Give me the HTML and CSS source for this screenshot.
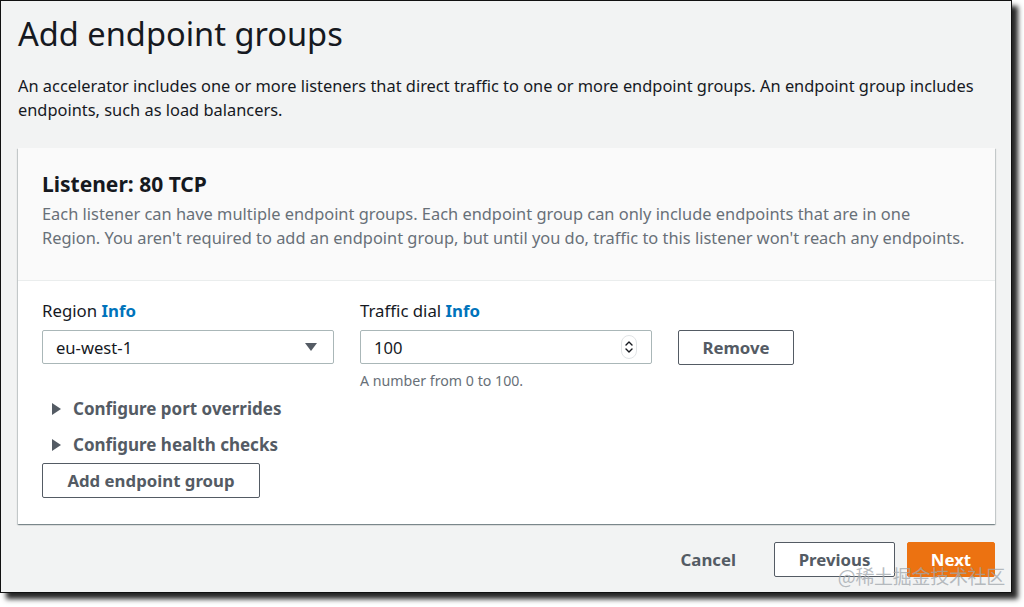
FILE: index.html
```html
<!DOCTYPE html>
<html lang="en">
<head>
  <meta charset="UTF-8" />
  <meta name="viewport" content="width=device-width, initial-scale=1.0" />
  <title>Add endpoint groups</title>
  <link rel="stylesheet" href="styles.css">
</head>
<body>
  <div class="frame">
    <h1 class="page-title">Add endpoint groups</h1>
    <p class="page-desc">An accelerator includes one or more listeners that direct traffic to one or more endpoint groups. An endpoint group includes endpoints, such as load balancers.</p>

    <section class="card">
      <header class="card-head">
        <h2 class="card-title">Listener: 80 TCP</h2>
        <p class="card-desc">Each listener can have multiple endpoint groups. Each endpoint group can only include endpoints that are in one Region. You aren't required to add an endpoint group, but until you do, traffic to this listener won't reach any endpoints.</p>
      </header>

      <div class="card-body">
        <div class="fields">
          <label class="field-label">Region <a class="info">Info</a></label>
          <label class="field-label">Traffic dial <a class="info">Info</a></label>
          <span></span>

          <div class="select">
            <span>eu-west-1</span>
            <svg class="caret" width="12" height="8" viewBox="0 0 12 8"><path d="M0 0h12L6 8z" fill="#545b64"/></svg>
          </div>
          <div class="input">
            <span>100</span>
            <svg class="spin" width="16" height="24" viewBox="0 0 16 24">
              <rect x="0.5" y="0.5" width="15" height="23" rx="7.5" fill="#fff" stroke="#e1e4e6"/>
              <path d="M5 10l3-3 3 3M5 14l3 3 3-3" fill="none" stroke="#16191f" stroke-width="1.4" stroke-linecap="round" stroke-linejoin="round"/>
            </svg>
          </div>
          <button class="btn">Remove</button>

          <span></span>
          <p class="hint">A number from 0 to 100.</p>
          <span></span>
        </div>

        <div class="expander"><span class="tri"></span>Configure port overrides</div>
        <div class="expander"><span class="tri"></span>Configure health checks</div>
        <button class="btn btn-add">Add endpoint group</button>
      </div>
    </section>

    <div class="actions">
      <button class="btn-link">Cancel</button>
      <button class="btn">Previous</button>
      <button class="btn btn-primary">Next</button>
    </div>

    <div class="watermark">@稀土掘金技术社区</div>
  </div>
</body>
</html>
```

FILE: styles.css
```css
*{margin:0;padding:0;box-sizing:border-box;}
html,body{width:100%;height:100%;overflow:hidden;background:#fff;}
body{font-family:'Noto Sans','Open Sans',sans-serif;color:#16191f;}
button{font-family:inherit;background:none;border:none;cursor:pointer;}

.frame{position:relative;width:1012px;height:593px;border:1px solid #111;background:#f2f3f3;padding:0 16px 0 17px;box-shadow:6px 6px 5px rgba(0,0,0,0.85);}

.page-title{font-size:32.6px;font-weight:400;line-height:40px;padding-top:13px;}
.page-desc{font-size:16.4px;line-height:24px;margin-top:20px;}

.card{margin-top:26px;background:#fff;box-shadow:0 1px 1px 0 rgba(0,28,36,0.3),1px 1px 1px 0 rgba(0,28,36,0.15),-1px 1px 1px 0 rgba(0,28,36,0.15);}
.card-head{background:#fafafa;padding:24px 24px 30px;border-bottom:1px solid #eaeded;}
.card-title{font-size:21px;font-weight:700;line-height:24px;}
.card-desc{font-size:16.4px;line-height:24px;color:#687078;margin-top:6px;}

.card-body{padding:18px 24px 26px;}
.fields{display:grid;grid-template-columns:292px 292px auto;column-gap:26px;row-gap:7px;justify-content:start;}
.field-label{font-size:16.8px;line-height:24px;}
.info{color:#0073bb;font-weight:700;}

.select,.input{height:34px;border:1px solid #aab7b8;border-radius:2px;display:flex;align-items:center;justify-content:space-between;padding:0 16px 0 13px;font-size:16.6px;}
.input{padding-right:14px;}
.hint{font-size:14.2px;line-height:20px;color:#687078;margin-top:-7px;padding-top:6px;}

.btn{height:35px;border:1px solid #545b64;border-radius:2px;background:#fff;color:#545b64;font-size:16.8px;font-weight:700;padding:0 20px;}
.fields .btn{width:116px;}

.expander{display:flex;align-items:center;font-size:17px;font-weight:700;color:#545b64;line-height:24px;margin-top:6px;}
.expander + .expander{margin-top:12px;}
.tri{width:0;height:0;border-top:6px solid transparent;border-bottom:6px solid transparent;border-left:9px solid #545b64;margin:0 12px 0 10px;}
.btn-add{margin-top:6px;width:218px;}

.actions{display:flex;justify-content:flex-end;align-items:center;margin-top:18px;}
.btn-link{color:#545b64;font-size:16.8px;font-weight:700;padding:0 38px 0 20px;height:35px;}
.actions .btn{width:121px;padding:0;}
.actions .btn-primary{background:#ec7211;border-color:#ec7211;color:#fff;margin-left:12px;width:88px;}

.watermark{position:absolute;right:6px;bottom:3px;font-family:'Noto Sans CJK SC',sans-serif;font-size:19px;color:rgba(160,166,172,0.75);letter-spacing:-0.3px;}
```
